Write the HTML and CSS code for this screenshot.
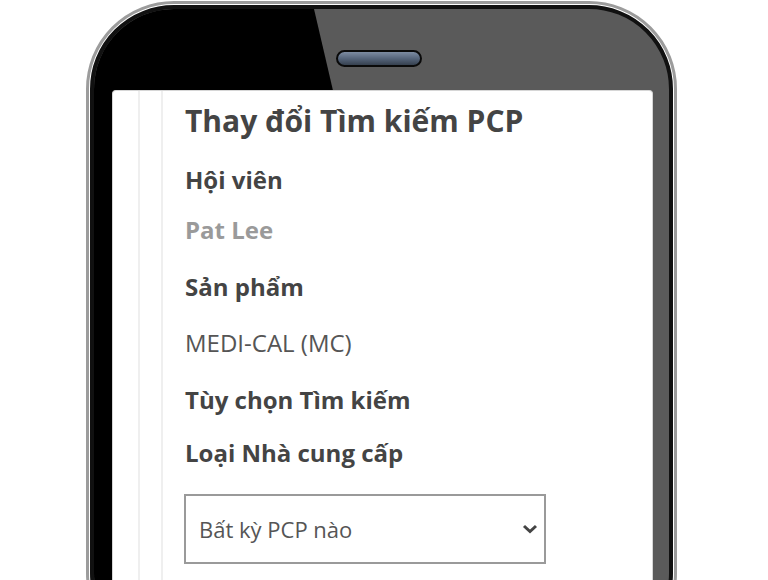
FILE: index.html
```html
<!DOCTYPE html>
<html lang="vi">
<head>
    <meta charset="UTF-8">
    <title>Thay đổi Tìm kiếm PCP</title>
    <link rel="stylesheet" href="styles.css">
</head>
<body>
<div id="stage">
    <div class="phone">
        <div class="phone-body">
            <div class="speaker"></div>
            <div class="screen">
                <div class="rail">
                    <div class="rail-inner">
                        <h1 class="title">Thay đổi Tìm kiếm PCP</h1>
                        <div class="label first">Hội viên</div>
                        <div class="value member">Pat Lee</div>
                        <div class="label">Sản phẩm</div>
                        <div class="value">MEDI-CAL (MC)</div>
                        <div class="label">Tùy chọn Tìm kiếm</div>
                        <div class="label tight">Loại Nhà cung cấp</div>
                        <div class="select-wrap">
                            <select class="select">
                                <option>Bất kỳ PCP nào</option>
                            </select>
                            <svg class="chevron" width="16" height="10" viewBox="0 0 16 10">
                                <polyline points="2,2 8,7.5 14,2" fill="none" stroke="#444" stroke-width="3"/>
                            </svg>
                        </div>
                    </div>
                </div>
            </div>
        </div>
    </div>
</div>
</body>
</html>
```

FILE: styles.css
```css
html, body {
    margin: 0;
    overflow: hidden;
    background: #fff;
}

#stage {
    width: 768px;
    height: 580px;
    overflow: hidden;
    padding: 1px 0 0 86px;
    box-sizing: border-box;
    font-family: "Open Sans", "Liberation Sans", sans-serif;
}

.phone {
    width: 591px;
    height: 660px;
    box-sizing: border-box;
    border: 3px solid #9c9c9c;
    padding: 1px;
    border-radius: 88px;
    background: #fff;
}

.phone-body {
    position: relative;
    height: 100%;
    box-sizing: border-box;
    border: 4px solid #111;
    border-radius: 84px;
    background: #5a5a5a;
    overflow: hidden;
    display: flex;
    flex-direction: column;
}

/* glare on the glass: left part black */
.phone-body::before {
    content: "";
    position: absolute;
    inset: 0;
    background: #000;
    clip-path: polygon(0 0, 220px 0, 383px 700px, 0 700px);
}

.speaker {
    position: relative;
    width: 82px;
    height: 13px;
    margin: 41px 0 23px 242px;
    border: 2px solid #0a0a0a;
    border-radius: 10px;
    background: linear-gradient(#7d8ca2, #56657b 50%, #36414f);
}

.screen {
    position: relative;
    flex: 1;
    margin: 0 16px 0 18px;
    background: #fff;
    border: 1px solid #d6d6d6;
    border-bottom: 0;
    border-radius: 4px 4px 0 0;
    display: flex;
}

.rail {
    margin-left: 25px;
    padding-left: 21px;
    border-left: 2px solid #efefef;
    display: flex;
}

.rail-inner {
    padding: 12px 0 0 22px;
    border-left: 2px solid #efefef;
    color: #444;
}

.title {
    margin: 0;
    font-size: 30px;
    line-height: 36px;
    font-weight: 700;
}

.label {
    margin-top: 27px;
    font-size: 24px;
    line-height: 30px;
    font-weight: 700;
}

.label.first {
    margin-top: 26px;
}

.label.tight {
    margin-top: 23px;
}

.value {
    margin-top: 26px;
    font-size: 24px;
    line-height: 30px;
    color: #555;
}

.value.member {
    margin-top: 20px;
    color: #9a9a9a;
    font-weight: 700;
}

.select-wrap {
    position: relative;
    margin-top: 26px;
    margin-left: -1px;
    width: 362px;
}

.select {
    appearance: none;
    -webkit-appearance: none;
    display: block;
    width: 362px;
    height: 70px;
    padding: 0 0 0 13px;
    border: 2px solid #9a9a9a;
    border-radius: 0;
    background: #fff;
    font-family: "Open Sans", "Liberation Sans", sans-serif;
    font-size: 22px;
    color: #555;
}

.chevron {
    position: absolute;
    top: 30px;
    right: 8px;
}
```
